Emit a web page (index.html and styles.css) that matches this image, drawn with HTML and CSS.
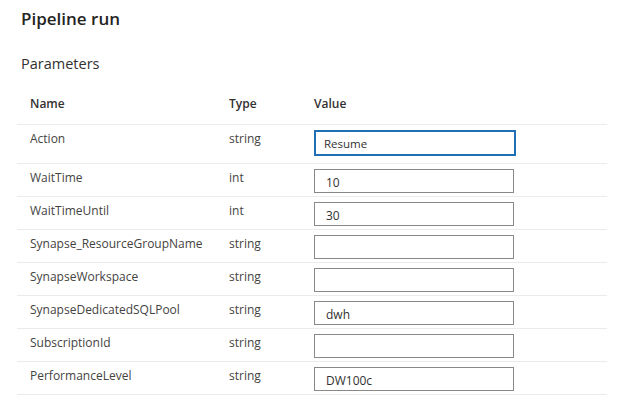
FILE: index.html
```html
<!DOCTYPE html>
<html>
<head>
<meta charset="utf-8">
<link rel="stylesheet" href="styles.css">
</head>
<body>
<div class="page">
  <h1 class="title">Pipeline run</h1>
  <h2 class="subtitle">Parameters</h2>
  <div class="params">
    <div class="row head">
      <div class="cell name">Name</div>
      <div class="cell type">Type</div>
      <div class="cell value">Value</div>
    </div>
    <div class="row first">
      <div class="cell name">Action</div>
      <div class="cell type">string</div>
      <div class="cell value"><div class="input focused">Resume</div></div>
    </div>
    <div class="row">
      <div class="cell name">WaitTime</div>
      <div class="cell type">int</div>
      <div class="cell value"><div class="input">10</div></div>
    </div>
    <div class="row">
      <div class="cell name">WaitTimeUntil</div>
      <div class="cell type">int</div>
      <div class="cell value"><div class="input">30</div></div>
    </div>
    <div class="row">
      <div class="cell name">Synapse_ResourceGroupName</div>
      <div class="cell type">string</div>
      <div class="cell value"><div class="input"></div></div>
    </div>
    <div class="row">
      <div class="cell name">SynapseWorkspace</div>
      <div class="cell type">string</div>
      <div class="cell value"><div class="input"></div></div>
    </div>
    <div class="row">
      <div class="cell name">SynapseDedicatedSQLPool</div>
      <div class="cell type">string</div>
      <div class="cell value"><div class="input">dwh</div></div>
    </div>
    <div class="row">
      <div class="cell name">SubscriptionId</div>
      <div class="cell type">string</div>
      <div class="cell value"><div class="input"></div></div>
    </div>
    <div class="row">
      <div class="cell name">PerformanceLevel</div>
      <div class="cell type">string</div>
      <div class="cell value"><div class="input">DW100c</div></div>
    </div>
  </div>
</div>
</body>
</html>
```

FILE: styles.css
```css
html, body {
  margin: 0;
  padding: 0;
  background: #ffffff;
}
body {
  font-family: "Open Sans", "Noto Sans", sans-serif;
  color: #323130;
  width: 620px;
  height: 420px;
  overflow: hidden;
}
.page {
  padding: 0 13px 0 17px;
}
.title {
  margin: 0;
  padding: 7px 0 0 4px;
  font-size: 17px;
  font-weight: 600;
  line-height: 24px;
  color: #252423;
}
.subtitle {
  margin: 0;
  padding: 23px 0 0 4px;
  font-size: 14.5px;
  font-weight: 400;
  line-height: 20px;
  color: #323130;
}
.params {
  margin-top: 21px;
  width: 590px;
}
.row {
  display: grid;
  grid-template-columns: 212px 85px 1fr;
  border-bottom: 1px solid #edebe9;
  padding: 5px 0 3px 0;
  font-size: 12px;
  line-height: 18px;
  color: #444342;
}
.row.head {
  padding: 0 0 11px 0;
  font-weight: 600;
  color: #323130;
}
.row.first {
  padding-bottom: 7px;
}
.cell.name {
  padding-left: 13px;
}
.input {
  box-sizing: border-box;
  width: 200px;
  height: 24px;
  border: 1px solid #8a8886;
  padding: 4px 0 0 11px;
  font-size: 12px;
  line-height: 18px;
  color: #323130;
}
.input.focused {
  width: 202px;
  height: 26px;
  border: 2px solid #1f6fb4;
  padding: 3px 0 0 8px;
  font-size: 11.5px;
}
```
